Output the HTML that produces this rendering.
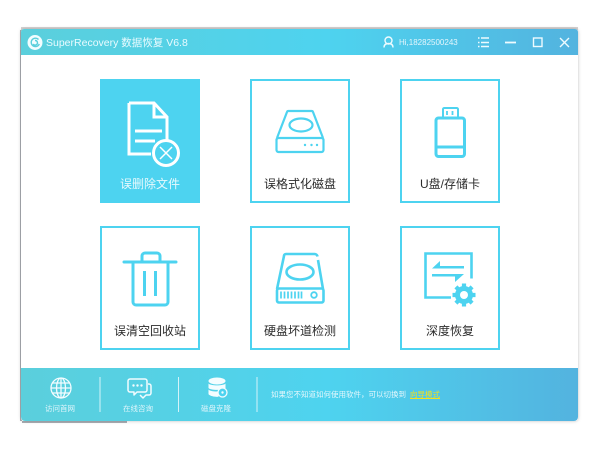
<!DOCTYPE html>
<html lang="zh">
<head>
<meta charset="utf-8">
<title>SuperRecovery</title>
<style>
html,body{margin:0;padding:0;background:#fff;width:600px;height:450px;overflow:hidden}
body{position:relative;font-family:"Liberation Sans","Noto Sans CJK SC",sans-serif}
.abs{position:absolute}
.win{left:21px;top:29px;width:557px;height:392px;background:#fff;border-radius:3px;box-shadow:0 0 3px rgba(90,90,90,.4)}
.bar{left:21px;width:557px;background:linear-gradient(90deg,#5bcfdc 0%,#4ed3ef 55%,#53b3df 100%)}
.title{left:46px;top:35px;color:#e9fbff;font-size:10.5px;line-height:16px;white-space:nowrap}
.user{left:399px;top:35px;color:#e4f6fc;font-size:8px;line-height:15px;white-space:nowrap}
.card{box-sizing:border-box;width:100px;height:124px;border:2px solid #4dd3f0;background:#fff}
.label{width:100px;text-align:center;font-size:12px;line-height:18px;color:#2b2b2b;white-space:nowrap}
.foot{width:60px;text-align:center;font-size:7.500px;line-height:11px;color:#def5fb;white-space:nowrap}
.hint{left:271px;top:389px;font-size:7.500px;line-height:11px;color:#e4f7fc;white-space:nowrap}
.hint u{color:#f5e21a;margin-left:4px}
svg{position:absolute;left:0;top:0}
</style>
</head>
<body>
<div class="abs" style="left:21px;top:27px;width:557px;height:3px;background:#d5d2d2"></div>
<div class="abs" style="left:20px;top:30px;width:2px;height:391px;background:#a9adb3"></div>
<div class="abs" style="left:22px;top:421px;width:105px;height:2px;background:#a9adb3"></div>
<div class="abs win"></div>
<div class="abs bar" style="top:29px;height:26px;border-radius:3px 3px 0 0"></div>
<div class="abs bar" style="top:368px;height:53px;border-radius:0 0 4px 4px"></div>

<div class="abs title">SuperRecovery 数据恢复 V6.8</div>
<div class="abs user">Hi,18282500243</div>

<div class="abs card" style="left:100px;top:79px;background:#4dd3f0"></div>
<div class="abs card" style="left:250px;top:79px"></div>
<div class="abs card" style="left:400px;top:79px"></div>
<div class="abs card" style="left:100px;top:226px"></div>
<div class="abs card" style="left:250px;top:226px"></div>
<div class="abs card" style="left:400px;top:226px"></div>

<div class="abs label" style="left:100px;top:175px;color:#e6f9fd">误删除文件</div>
<div class="abs label" style="left:250px;top:175px">误格式化磁盘</div>
<div class="abs label" style="left:400px;top:175px">U盘/存储卡</div>
<div class="abs label" style="left:100px;top:322px">误清空回收站</div>
<div class="abs label" style="left:250px;top:322px">硬盘坏道检测</div>
<div class="abs label" style="left:400px;top:322px">深度恢复</div>

<div class="abs foot" style="left:30px;top:403px">访问首网</div>
<div class="abs foot" style="left:108px;top:403px">在线咨询</div>
<div class="abs foot" style="left:186px;top:403px">磁盘克隆</div>
<div class="abs hint">如果您不知道如何使用软件，可以切换到<u>向导模式</u></div>

<svg width="600" height="450" viewBox="0 0 600 450" fill="none">
  <!-- logo -->
  <circle cx="35" cy="42.500" r="7.500" fill="#f2fdff"/>
  <path d="M38.500 39.500a4.200 4.200 0 1 0 .8 4.500M35 40.500a2.300 2.300 0 1 1-1.800 3.500" stroke="#5bcfdc" stroke-width="1.400"/>

  <!-- title controls -->
  <g stroke="#eefbff" stroke-width="1.400">
    <circle cx="388.500" cy="40.500" r="3.500"/>
    <path d="M384 47.500c0-3 2-4 4.500-4s4.500 1 4.500 4"/>
    <path d="M478 38h1.500M481 38h8M478 42.500h1.500M481 42.500h8M478 46.500h1.500M481 46.500h8"/>
    <path d="M505 42.500h11" stroke-width="1.800"/>
    <rect x="533.500" y="38" width="8.500" height="8.500"/>
    <path d="M560 38l9 9M569 38l-9 9"/>
  </g>

  <!-- document -->
  <path d="M129 103h25l13 14v23M154 103v14h13M129 103v51h22" stroke="#fff" stroke-width="3" stroke-linejoin="miter"/>
  <path d="M135 131h27M135 141h20" stroke="#fff" stroke-width="3"/>
  <circle cx="166" cy="153" r="12.500" fill="#4dd3f0" stroke="#fff" stroke-width="3"/>
  <path d="M160 147l12 12M172 147l-12 12" stroke="#fff" stroke-width="1.500"/>

  <!-- disk 1 -->
  <g stroke="#4dd3f0" stroke-width="2.200" stroke-linejoin="round">
    <path d="M277 138l10-26a1.500 1.500 0 0 1 1.500-1h23a1.500 1.500 0 0 1 1.500 1l10 26"/>
    <rect x="276.500" y="138" width="47" height="14" rx="2"/>
    <ellipse cx="301" cy="125" rx="11.500" ry="6.500"/>
  </g>
  <g fill="#4dd3f0"><circle cx="305" cy="145" r="1.200"/><circle cx="311.500" cy="145" r="1.200"/><circle cx="317" cy="145" r="1.200"/></g>

  <!-- usb -->
  <g stroke="#4dd3f0" stroke-linejoin="round">
    <rect x="436" y="118" width="28.500" height="38.500" rx="2.500" stroke-width="3"/>
    <path d="M436 147h28.500" stroke-width="3"/>
    <path d="M443 118v-9a1.500 1.500 0 0 1 1.500-1h12a1.500 1.500 0 0 1 1.500 1v9" stroke-width="2"/>
    <path d="M447 111v4M452.500 111v4" stroke-width="1.800"/>
  </g>

  <!-- trash -->
  <g stroke="#4dd3f0" stroke-width="3" stroke-linecap="round" stroke-linejoin="round">
    <path d="M124 262h52"/>
    <path d="M142 261v-5a3 3 0 0 1 3-3h12a3 3 0 0 1 3 3v5"/>
    <path d="M133 263v39a3 3 0 0 0 3 3h29a3 3 0 0 0 3-3v-39"/>
    <path d="M144.500 271v25M155.500 271v25" stroke-linecap="butt"/>
  </g>

  <!-- disk 2 -->
  <g stroke="#4dd3f0" stroke-width="2.600" stroke-linejoin="round">
    <path d="M277 289l7-33a2 2 0 0 1 2-2h28.500a3 3 0 0 1 3 2.500M318 260l5 29"/>
    <rect x="277" y="288.500" width="46.500" height="14" rx="2"/>
    <ellipse cx="300" cy="272" rx="13.500" ry="7.500"/>
    <circle cx="314" cy="295" r="2.800" stroke-width="1.800"/>
    <path d="M281 291.500v7M284.500 291.500v7M288 291.500v7M291.500 291.500v7M295 291.500v7M298.500 291.500v7M301.500 291.500v7" stroke-width="1.700"/>
  </g>

  <!-- deep -->
  <path d="M451 297.500h-25.500v-44h46v25" stroke="#4dd3f0" stroke-width="2.600"/>
  <path d="M432 268.500h32v-2.500h-24v-5zM432 274h32l-9 8v-5.500h-23z" fill="#4dd3f0"/>
  <g fill="#4dd3f0">
    <circle cx="464" cy="295" r="9"/>
    <g stroke="#4dd3f0" stroke-width="4.200">
      <path d="M464 283.500v23M452.500 295h23M455.900 286.900l16.200 16.200M472.100 286.900l-16.200 16.200"/>
    </g>
  </g>
  <circle cx="464" cy="295" r="4" fill="#fff"/>

  <!-- footer separators -->
  <path d="M100 377v35M178.500 377v35M257 377v35" stroke="#d4f3f9" stroke-width="1"/>

  <!-- globe -->
  <g stroke="#f2fcff" stroke-width="1.300">
    <circle cx="61" cy="388" r="10"/>
    <ellipse cx="61" cy="388" rx="4.500" ry="10"/>
    <path d="M61 378v20M51 388h20M52.500 383h17M52.500 393h17"/>
  </g>

  <!-- chat -->
  <g stroke="#f2fcff" stroke-width="1.500" stroke-linejoin="round">
    <path d="M130 379h15a2 2 0 0 1 2 2v9a2 2 0 0 1-2 2h-8l-3 3v-3h-4a2 2 0 0 1-2-2v-9a2 2 0 0 1 2-2z"/>
    <path d="M148 384h1a2 2 0 0 1 2 2v7a2 2 0 0 1-2 2h-3l-3 3-3-3"/>
  </g>
  <g fill="#f2fcff"><circle cx="133.500" cy="385.500" r="1.200"/><circle cx="137.500" cy="385.500" r="1.200"/><circle cx="141.500" cy="385.500" r="1.200"/></g>

  <!-- database -->
  <g fill="#f4fdff">
    <ellipse cx="217" cy="381" rx="8.500" ry="3.500"/>
    <path d="M208.500 383.500c2 2.500 15 2.500 17 0v4.500c-2 2.500-15 2.500-17 0z"/>
    <path d="M208.500 389.500c2 2.500 12 2.500 15 .8-3 1-5 3-5 6.500-4 .2-8-.5-10-2.500z"/>
  </g>
  <circle cx="222.500" cy="392.500" r="4.500" fill="#4dd3f0" stroke="#f4fdff" stroke-width="1.300"/>
  <circle cx="222.500" cy="392.500" r="1.200" fill="#f4fdff"/>
</svg>
</body>
</html>
